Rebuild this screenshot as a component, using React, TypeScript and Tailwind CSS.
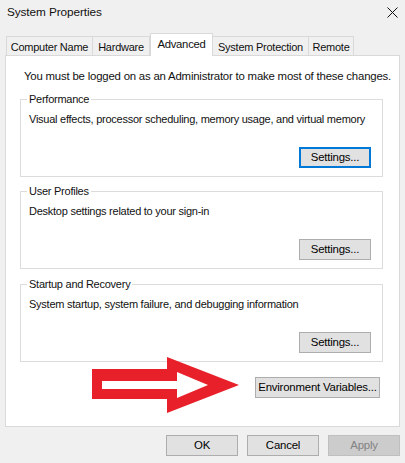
import { ReactNode } from "react";

function WinButton({
  children,
  width = "w-[72px]",
  variant = "normal",
}: {
  children: ReactNode;
  width?: string;
  variant?: "normal" | "default" | "disabled";
}) {
  const look =
    variant === "default"
      ? "border-2 border-[#0078d7] bg-[#e1e1e1] text-black"
      : variant === "disabled"
        ? "border border-[#bfbfbf] bg-[#cccccc] text-[#838383]"
        : "border border-[#adadad] bg-[#e1e1e1] text-black";
  return (
    <button className={`${width} h-[21px] ${look} flex items-center justify-center whitespace-nowrap leading-none text-[11.4px] tracking-[-0.2px]`}>
      {children}
    </button>
  );
}

function GroupBox({ title, text, focused }: { title: string; text: string; focused?: boolean }) {
  return (
    <div className="relative border border-[#dcdcdc] h-[78px] pt-[12px] pl-[8px] pr-[11px] pb-[8px] flex flex-col">
      <span className="absolute -top-[8px] left-[6px] px-[2px] bg-white leading-[15px] whitespace-nowrap">{title}</span>
      <p className="leading-[15px] whitespace-nowrap">{text}</p>
      <div className="mt-[20px] flex justify-end">
        <WinButton variant={focused ? "default" : "normal"}>Settings...</WinButton>
      </div>
    </div>
  );
}

const tabs = [
  { label: "Computer Name", w: "w-[87px]" },
  { label: "Hardware", w: "w-[57px]" },
  { label: "Advanced", w: "w-[63px]", active: true },
  { label: "System Protection", w: "w-[96px]" },
  { label: "Remote", w: "w-[45px]" },
];

export default function App() {
  return (
    <div className="w-[405px] h-[463px] bg-[#f0f0f0] overflow-hidden text-[11px] tracking-[-0.25px] text-[#111] font-['Liberation_Sans',Arial,sans-serif]">
      {/* Title bar */}
      <div className="h-[33px] flex justify-between items-start pl-[7px] pr-[7px]">
        <span className="pt-[4px] leading-[16px] text-[11.8px] tracking-[-0.1px]">System Properties</span>
        <svg width="11" height="11" viewBox="0 0 11 11" className="mt-[7px]">
          <path d="M0.5 0.5 L10.5 10.5 M10.5 0.5 L0.5 10.5" stroke="#111" strokeWidth="1" />
        </svg>
      </div>

      {/* Tabs */}
      <div className="h-[22px] mx-[5px] pl-[1px] flex items-end">
        {tabs.map((t, i) =>
          t.active ? (
            <div
              key={t.label}
              className={`${t.w} h-[23px] -mb-px relative z-10 bg-white border-x border-t border-[#d9d9d9] flex items-start justify-center pt-[3px] leading-[15px] whitespace-nowrap text-[11.3px]`}
            >
              {t.label}
            </div>
          ) : (
            <div
              key={t.label}
              className={`${t.w} h-[19px] bg-[#f0f0f0] border-t border-r border-[#d9d9d9] ${i === 0 ? "border-l" : ""} flex items-start justify-center pt-[3px] leading-[15px] whitespace-nowrap`}
            >
              {t.label}
            </div>
          )
        )}
      </div>

      {/* Tab page */}
      <div className="mx-[5px] h-[372px] bg-white border border-[#d9d9d9] pl-[14px] pr-[16px] pt-[13px] flex flex-col">
        <p className="ml-[4px] leading-[15px] whitespace-nowrap text-[11.4px] tracking-[-0.2px]">
          You must be logged on as an Administrator to make most of these changes.
        </p>
        <div className="mt-[15px]">
          <GroupBox title="Performance" text="Visual effects, processor scheduling, memory usage, and virtual memory" focused />
        </div>
        <div className="mt-[14px]">
          <GroupBox title="User Profiles" text="Desktop settings related to your sign-in" />
        </div>
        <div className="mt-[15px]">
          <GroupBox title="Startup and Recovery" text="System startup, system failure, and debugging information" />
        </div>
        <div className="mt-[15px] pr-[3px] flex justify-end relative">
          <svg width="150" height="58" viewBox="0 0 150 58" className="absolute left-[72px] -top-[20px]">
            <path
              fillRule="evenodd"
              fill="#e8202a"
              d="M0 12 L75 12 L75 0 L147 28 L75 56 L75 42 L0 42 Z M10 24 L85 24 L85 15 L116 28 L85 41 L85 32 L10 32 Z"
            />
          </svg>
          <WinButton width="w-[125px]">Environment Variables...</WinButton>
        </div>
      </div>

      {/* Dialog buttons */}
      <div className="mt-[8px] pr-[5px] flex justify-end gap-[9px]">
        <WinButton>OK</WinButton>
        <WinButton>Cancel</WinButton>
        <WinButton variant="disabled">Apply</WinButton>
      </div>
    </div>
  );
}
